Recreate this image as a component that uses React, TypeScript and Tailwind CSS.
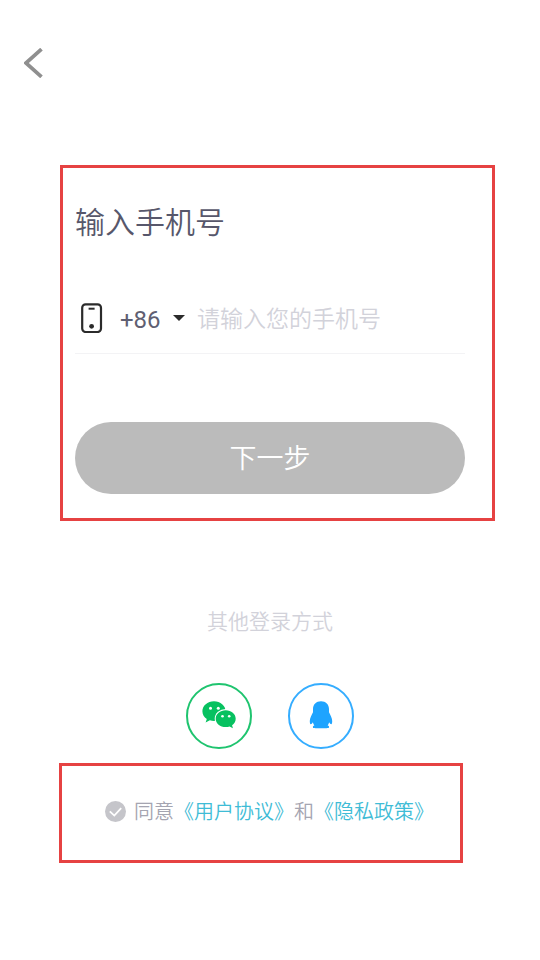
import type { ReactNode } from "react";

function BackIcon() {
  return (
    <svg viewBox="0 0 20 30" className="w-5 h-[30px]" fill="none" stroke="#8f8f8f" strokeWidth="3.8">
      <path d="M17.500 1.200 1.900 15 17.500 28.800" />
    </svg>
  );
}

function PhoneIcon() {
  return (
    <svg viewBox="0 0 22 30" className="w-[22px] h-[30px] shrink-0" fill="none" stroke="#2b2b2b">
      <rect x="1.200" y="1.400" width="18.800" height="27.600" rx="3.400" strokeWidth="2.200" />
      <path d="M7.600 5.700h6" strokeWidth="2" />
      <circle cx="10.600" cy="23.300" r="2.400" fill="#2b2b2b" stroke="none" />
    </svg>
  );
}

function WechatIcon() {
  return (
    <svg viewBox="0 0 34 28" className="w-[34px] h-7">
      <path
        fill="#07c160"
        d="M12 .2C5.600.2.400 4.600.4 10.200c0 3.200 1.700 6 4.400 7.800l-1.200 3.400 4.300-2.100c1.300.4 2.700.6 4.100.6 6.400 0 11.600-4.200 11.600-9.700S18.400.2 12 .2z"
      />
      <ellipse cx="23.700" cy="17.700" rx="11" ry="9.700" fill="#fff" />
      <path
        fill="#07c160"
        d="M23.700 9.300c-5.600 0-10 3.700-10 8.400s4.400 8.400 10 8.400c1.400 0 2.700-.2 3.900-.6l3.300 1.800-.8-3c2.200-1.600 3.600-3.900 3.600-6.600 0-4.700-4.400-8.400-10-8.400z"
      />
      <g fill="#fff">
        <circle cx="8.500" cy="7.200" r="1.500" />
        <circle cx="16.300" cy="7.200" r="1.500" />
        <circle cx="20.500" cy="15.200" r="1.300" />
        <circle cx="27.200" cy="15.200" r="1.300" />
      </g>
    </svg>
  );
}

function QqIcon() {
  return (
    <svg viewBox="0 0 24 28" className="w-6 h-7" fill="#1ea4ff">
      <path d="M12 .2C7.200.2 4 3.500 4 8v3.200C2.800 13.500.8 17.200.8 20c0 1.700.3 3.200.9 3.200.7 0 1.500-.8 2.200-2 .4 1.500.700 2.200 1.500 3.100-1.100.5-1.500 1.200-1.500 1.800 0 .8.700 1.200 2.700 1.200h10.800c2 0 2.700-.4 2.700-1.200 0-.6-.4-1.300-1.500-1.800.8-.9 1.100-1.600 1.500-3.100.7 1.200 1.500 2 2.200 2 .6 0 .9-1.500.9-3.200 0-2.800-2-6.500-3.200-8.800V8C20 3.500 16.800.2 12 .2z" />
    </svg>
  );
}

function SocialButton({ label, color, children }: { label: string; color: string; children: ReactNode }) {
  return (
    <button
      type="button"
      aria-label={label}
      className={`flex items-center justify-center size-[66px] rounded-full border-2 pb-[3px] ${color}`}
    >
      {children}
    </button>
  );
}

export default function App() {
  return (
    <div className="min-h-screen bg-white pb-24 font-[350] font-['Noto_Sans_CJK_SC',sans-serif]">
      <header className="flex px-6 pt-12">
        <button type="button" aria-label="返回">
          <BackIcon />
        </button>
      </header>

      <main>
        {/* Phone form */}
        <form className="mt-[87px] ml-[60px] mr-[45px] border-3 border-[#e64242] pt-8 pr-[27px] pb-6 pl-3">
          <h1 className="text-[30px] leading-10 text-[#57576b]">输入手机号</h1>

          <div className="mt-[43px] flex h-[71px] items-center border-b border-[#f3f3f5] pl-[6px]">
            <PhoneIcon />
            <div className="relative ml-[17px] w-[65px] shrink-0">
              <select
                aria-label="国家区号"
                className="block w-full appearance-none bg-transparent pt-[3px] text-[24px] leading-8 font-normal font-['Roboto',sans-serif] text-[#5f5f72]"
              >
                <option>+86</option>
              </select>
              <svg viewBox="0 0 12 6" className="pointer-events-none absolute right-0 top-[14px] w-3 h-[6px]" fill="#2b2b2b">
                <path d="M0 0h12L6 6z" />
              </svg>
            </div>
            <input
              type="tel"
              aria-label="手机号"
              placeholder="请输入您的手机号"
              className="ml-3 h-10 min-w-0 flex-1 bg-transparent pb-[2px] text-[23px] text-[#57576b] outline-none placeholder:text-[#d2d2da]"
            />
          </div>

          <button type="button" className="mt-[68px] h-[72px] w-full rounded-full bg-[#bbbbbb] pb-[2px] text-[27px] text-white">
            下一步
          </button>
        </form>

        {/* Other ways to sign in */}
        <section className="mt-[84px]">
          <h2 className="text-center text-[21px] leading-[30px] text-[#d2d2da]">其他登录方式</h2>
          <div className="mt-12 flex justify-center gap-9">
            <SocialButton label="微信登录" color="border-[#1fc46f]">
              <WechatIcon />
            </SocialButton>
            <SocialButton label="QQ登录" color="border-[#35adff]">
              <QqIcon />
            </SocialButton>
          </div>
        </section>

        {/* Agreement */}
        <div className="mt-[14px] ml-[59px] mr-[77px] flex items-center border-3 border-[#e64242] pt-[29px] pb-[33px] pl-[43px] text-[20px] leading-8 text-[#a5a5b1]">
          <span className="relative mr-2 flex shrink-0">
            <input
              id="agree"
              type="checkbox"
              defaultChecked
              className="size-[21px] appearance-none rounded-full bg-[#c5c5ca]"
            />
            <svg
              viewBox="0 0 21 21"
              className="pointer-events-none absolute inset-0"
              fill="none"
              stroke="#fff"
              strokeWidth="1.8"
            >
              <path d="M4.800 10.400 9.300 14.600 16.200 7.200" />
            </svg>
          </span>
          <p className="whitespace-nowrap">
            <label htmlFor="agree">同意</label>
            <a href="#terms" className="text-[#3fbcd6]">《用户协议》</a>
            和
            <a href="#privacy" className="text-[#3fbcd6]">《隐私政策》</a>
          </p>
        </div>
      </main>
    </div>
  );
}
